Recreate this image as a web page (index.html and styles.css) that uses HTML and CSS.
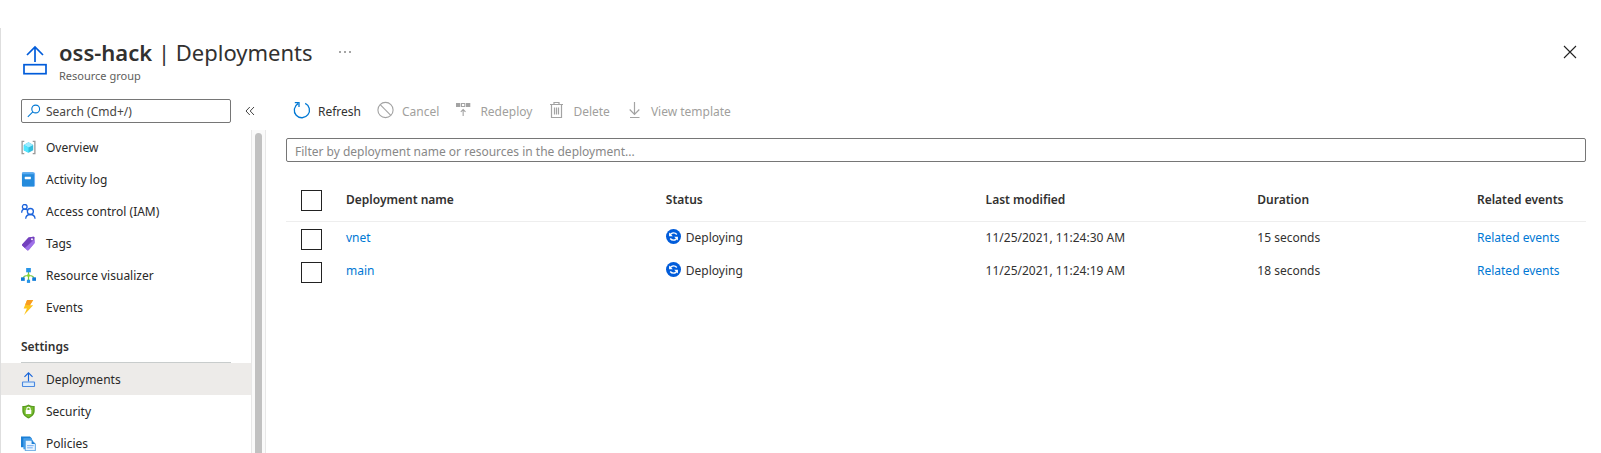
FILE: index.html
```html
<!DOCTYPE html>
<html lang="en">
<head>
<meta charset="utf-8">
<title>oss-hack | Deployments</title>
<link rel="stylesheet" href="styles.css">
</head>
<body>
<div class="blade">
  <header class="blade-header">
    <svg class="blade-icon" viewBox="0 0 24 30" fill="none" stroke="#015cda" stroke-width="1.700"><path d="M12 17V2M4 10l8-8 8 8"/><rect x="1" y="19.700" width="22" height="9"/></svg>
    <div class="blade-titles">
      <h1 class="title"><strong>oss-hack</strong> | Deployments</h1>
      <p class="subtitle">Resource group</p>
    </div>
    <button class="icon-button more" type="button" aria-label="More"><svg width="12" height="4" viewBox="0 0 12 4" fill="#333"><circle cx="1" cy="2" r=".8"/><circle cx="6" cy="2" r=".8"/><circle cx="11" cy="2" r=".8"/></svg></button>
    <button class="icon-button close" type="button" aria-label="Close"><svg width="14" height="14" viewBox="0 0 14 14" stroke="#222" stroke-width="1.1"><path d="M1 1l12 12M13 1L1 13"/></svg></button>
  </header>

  <div class="blade-body">
    <aside class="sidebar">
      <div class="search-row">
        <div class="search-box">
          <svg width="14" height="14" viewBox="0 0 14 14" fill="none" stroke="#0078d4" stroke-width="1.1"><circle cx="8.700" cy="5" r="3.900"/><path d="M5.800 7.800L.8 12.800"/></svg>
          <input class="search-input" type="text" placeholder="Search (Cmd+/)" aria-label="Search">
        </div>
        <button class="icon-button collapse" type="button" aria-label="Collapse menu"><svg width="10" height="10" viewBox="0 0 10 10" fill="none" stroke="#444"><path d="M4.800 1L1 5l3.800 4M9 1L5.200 5 9 9"/></svg></button>
      </div>
      <div class="menu-area">
        <nav class="menu">
          <a class="menu-item" href="#"><svg class="menu-icon" viewBox="0 0 16 16"><path d="M3.500 1.500H1.200v13h2.300M12.500 1.500h2.300v13h-2.300" fill="none" stroke="#999" stroke-width="1.400"/><path d="M8 2.500l5 2.700v5.600L8 13.500l-5-2.700V5.200z" fill="#32bedd"/><path d="M8 2.500l5 2.700L8 8 3 5.200z" fill="#9cebff"/><path d="M3 5.200L8 8v5.500l-5-2.700z" fill="#50e6ff"/></svg>Overview</a>
          <a class="menu-item" href="#"><svg class="menu-icon" viewBox="0 0 16 16"><rect x="1.500" y=".500" width="13.500" height="15" rx="1" fill="#83b9f9"/><path d="M1 1.500a1 1 0 011-1h10.500A1.500 1.500 0 0114 2v13.500H2a1 1 0 01-1-1z" fill="#258bdc"/><path d="M1 1.500a1 1 0 011-1h10.500A1.500 1.500 0 0114 2v.5H1z" fill="#58aaf0"/><rect x="4" y="5" width="6.500" height="2.700" rx=".4" fill="#fff"/></svg>Activity log</a>
          <a class="menu-item" href="#"><svg class="menu-icon" viewBox="0 0 16 16" fill="none" stroke="#1b63dc" stroke-width="1.400"><circle cx="4" cy="3" r="2.500"/><path d="M.7 9.300C.8 7 2.200 5.500 4 5.500c1 0 1.700.3 2.300.9"/><circle cx="10" cy="8" r="3.200"/><path d="M5 15.700c.2-2.700 2.300-4.500 5-4.500s4.800 1.800 5 4.500"/></svg>Access control (IAM)</a>
          <a class="menu-item" href="#"><svg class="menu-icon" viewBox="0 0 16 16"><path d="M8 1.500L13 .800a1.200 1.200 0 011.400 1.200l.2 5.500-6.300 7.500a1.200 1.200 0 01-1.700.1L1.500 10.500a1.200 1.200 0 01-.1-1.700z" fill="#8a58cf"/><path d="M8 1.500L13 .800a1.200 1.200 0 011.400 1.200L4.500 13 1.500 10.500a1.200 1.200 0 01-.1-1.700z" fill="#7340bd"/><path d="M14.400 4l.2 3.500-6.300 7.500a1.200 1.200 0 01-1.700.1L4 12.800z" fill="#a67af4" opacity=".7"/><circle cx="11.700" cy="3.400" r="1" fill="#fff"/></svg>Tags</a>
          <a class="menu-item" href="#"><svg class="menu-icon" viewBox="0 0 16 16"><path d="M8 4v9M2 12c0-3 2.500-4 6-4s6 1 6 4" fill="none" stroke="#77c43a" stroke-width="1.300"/><circle cx="8" cy="8" r="1.500" fill="#86d633"/><rect x="5.500" y="0" width="5" height="4.600" fill="#2795e8"/><rect x="0" y="10" width="4" height="3.700" fill="#0f7bd8"/><rect x="12" y="10" width="4" height="3.700" fill="#0f7bd8"/><rect x="6.300" y="12.500" width="3.400" height="3.400" fill="#2795e8"/></svg>Resource visualizer</a>
          <a class="menu-item" href="#"><svg class="menu-icon" viewBox="0 0 16 16"><path d="M6.500 0H13L9.500 5.500H13L3.300 16l3-7H2.800z" fill="#fcc41c"/><path d="M6.500 0H13L9.500 5.500 4.500 5z" fill="#f99b22"/></svg>Events</a>
          <h2 class="menu-heading">Settings</h2>
          <a class="menu-item selected" href="#" aria-current="page"><svg class="menu-icon" viewBox="0 0 16 16" fill="none" stroke="#1664d9" stroke-width="1.200"><path d="M8 10V1M3.700 5.200L8 .900l4.300 4.300"/><rect x="1.600" y="10.600" width="12.800" height="4.800" rx=".5" fill="#dcecfb" stroke="#4a88e0"/></svg>Deployments</a>
          <a class="menu-item" href="#"><svg class="menu-icon" viewBox="0 0 16 16"><path d="M8 .500c2 1.400 4 1.600 6.600 1.600v5.300c0 4-3.600 6.600-6.600 8.100-3-1.500-6.600-4.100-6.600-8.100V2.100C4 2.100 6 1.900 8 .500z" fill="#5a9c21"/><path d="M8 2c1.600 1 3.300 1.300 5.100 1.300v4.200c0 3.200-2.600 5.300-5.100 6.600-2.500-1.300-5.100-3.400-5.100-6.600V3.300C4.700 3.300 6.400 3 8 2z" fill="#76bc2d"/><rect x="5" y="6.300" width="6" height="4.400" rx=".5" fill="#fff"/><path d="M6.200 6.600V5.300a1.800 1.800 0 013.600 0v1.300" fill="none" stroke="#fff" stroke-width="1.200"/></svg>Security</a>
          <a class="menu-item" href="#"><svg class="menu-icon" viewBox="0 0 16 16"><path d="M0 .500h9.500l2 2V12H0z" fill="#1b7fd6"/><path d="M2.500 2.500h8l2 2V14h-10z" fill="#4ca3ec"/><path d="M4.500 4.500h6.800l4 4v7.200H4.500z" fill="#e8f4ff" stroke="#2b88d8" stroke-width=".8"/><path d="M11.300 4.500v4h4z" fill="#1b7fd6"/><path d="M6.500 10.300h7M6.500 12.600h6" stroke="#5ea0ef" stroke-width=".9"/></svg>Policies</a>
        </nav>
        <div class="scroll-track"><div class="scroll-thumb"></div></div>
      </div>
    </aside>

    <main class="content">
      <div class="toolbar">
        <button class="command" type="button"><svg class="command-icon" viewBox="0 0 18 18" fill="none" stroke="#0078d4" stroke-width="1.300"><path d="M12.200 2.300A7.600 7.600 0 1 1 5 2.600M1.800 1.700H6v4.400"/></svg>Refresh</button>
        <button class="command" type="button" disabled><svg class="command-icon" viewBox="0 0 18 18" fill="none" stroke="#a3a3a3" stroke-width="1.100"><circle cx="8.500" cy="9" r="7.600"/><path d="M3.200 3.700l10.600 10.600"/></svg>Cancel</button>
        <button class="command" type="button" disabled><svg class="command-icon" viewBox="0 0 18 18" fill="#a3a3a3"><path d="M1 2h4.300v4H1zM11 2h4.300v4H11z"/><path d="M6.500 2.500h3.300v3H6.500zM8.150 15V9M5.800 10.800l2.350-2.300 2.350 2.300" fill="none" stroke="#a3a3a3" stroke-width="1.100"/></svg>Redeploy</button>
        <button class="command" type="button" disabled><svg class="command-icon" viewBox="0 0 18 18" fill="none" stroke="#a3a3a3" stroke-width="1.200"><path d="M2 3.500h13M6 3.500v-2h5v2M3.500 3.500v13h10v-13M6.500 6.500v7M8.500 6.500v7M10.500 6.500v7"/></svg>Delete</button>
        <button class="command" type="button" disabled><svg class="command-icon" viewBox="0 0 18 18" fill="none" stroke="#a3a3a3" stroke-width="1.200"><path d="M8.500 1v12M3.700 8.500l4.800 4.800 4.800-4.800M4 16.500h9.500"/></svg>View template</button>
      </div>
      <input class="filter-input" type="text" placeholder="Filter by deployment name or resources in the deployment..." aria-label="Filter deployments">
      <table class="deployments">
        <colgroup><col class="col-check"><col class="col-name"><col class="col-status"><col class="col-modified"><col class="col-duration"><col></colgroup>
        <thead>
          <tr><th class="check-cell"><input class="check" type="checkbox" aria-label="Select all"></th><th>Deployment name</th><th>Status</th><th>Last modified</th><th>Duration</th><th>Related events</th></tr>
        </thead>
        <tbody>
          <tr><td class="check-cell"><input class="check" type="checkbox" aria-label="Select vnet"></td><td><a class="link" href="#">vnet</a></td><td><span class="status"><svg class="status-icon" viewBox="0 0 16 16"><circle cx="8" cy="8" r="8" fill="#015cda"/><path d="M4.300 6.700C5 5 6.300 4.100 8 4.100c1.500 0 2.600.6 3.500 1.800M11.700 9.300C11 11 9.700 11.900 8 11.900c-1.500 0-2.600-.6-3.500-1.800" fill="none" stroke="#fff" stroke-width="1.500"/><path d="M3.300 3.800v4h4zM12.700 12.200v-4h-4z" fill="#fff"/></svg>Deploying</span></td><td>11/25/2021, 11:24:30 AM</td><td>15 seconds</td><td><a class="link" href="#">Related events</a></td></tr>
          <tr><td class="check-cell"><input class="check" type="checkbox" aria-label="Select main"></td><td><a class="link" href="#">main</a></td><td><span class="status"><svg class="status-icon" viewBox="0 0 16 16"><circle cx="8" cy="8" r="8" fill="#015cda"/><path d="M4.300 6.700C5 5 6.300 4.100 8 4.100c1.500 0 2.600.6 3.500 1.800M11.700 9.300C11 11 9.700 11.900 8 11.900c-1.500 0-2.600-.6-3.500-1.800" fill="none" stroke="#fff" stroke-width="1.500"/><path d="M3.300 3.800v4h4zM12.700 12.200v-4h-4z" fill="#fff"/></svg>Deploying</span></td><td>11/25/2021, 11:24:19 AM</td><td>18 seconds</td><td><a class="link" href="#">Related events</a></td></tr>
        </tbody>
      </table>
    </main>
  </div>
</div>
</body>
</html>
```
FILE: styles.css
```css
* { box-sizing: border-box; }

body {
  margin: 0;
  height: 100vh;
  overflow: hidden;
  padding-top: 28px;
  background: #fff;
  color: #323130;
  font: 12px/16px "Noto Sans", "Open Sans", sans-serif;
}

button, input { font: inherit; color: inherit; }

.blade {
  height: 100%;
  display: flex;
  flex-direction: column;
  border-left: 1px solid #dedede;
}

.blade-header {
  display: flex;
  align-items: flex-start;
  padding: 8px 24px 0 22px;
}

.blade-icon { width: 24px; height: 30px; margin-top: 9px; }
.blade-titles { margin-left: 12px; }
.title { margin: 0; font-size: 22px; line-height: 32px; font-weight: 400; }
.title strong { font-weight: 600; }
.subtitle { margin: 0; font-size: 11px; line-height: 16px; color: #605e5c; }

.icon-button {
  display: flex;
  align-items: center;
  justify-content: center;
  padding: 0;
  border: 0;
  background: none;
}

.more { width: 24px; height: 32px; margin-left: 20px; }
.close { width: 14px; height: 32px; margin-left: auto; }

.blade-body { flex: 1; min-height: 0; display: flex; padding-top: 15px; }

.sidebar { width: 265px; flex: none; display: flex; flex-direction: column; }
.search-row { display: flex; align-items: center; gap: 14px; padding: 0 0 7px 20px; }

.search-box {
  width: 210px;
  height: 24px;
  display: flex;
  align-items: center;
  gap: 5px;
  padding: 0 5px;
  border: 1px solid #767676;
  border-radius: 2px;
}

.search-input { flex: 1; min-width: 0; padding: 2px 0 0; border: 0; outline: 0; background: none; }
.search-input::placeholder { color: #484644; opacity: 1; }

.menu-area { flex: 1; min-height: 0; display: flex; }
.menu { flex: 1; overflow: hidden; padding-top: 1px; }

.menu-item {
  height: 32px;
  display: flex;
  align-items: center;
  gap: 10px;
  padding: 2px 0 0 20px;
  color: #292827;
  text-decoration: none;
}

.menu-icon { width: 15px; height: 15px; margin-bottom: 2px; }
.selected { background: #edebe9; }

.menu-heading {
  margin: 8px 20px 0;
  padding: 8px 0 7px;
  border-bottom: 1px solid #c8cccc;
  font-size: 12px;
  line-height: 16px;
  font-weight: 600;
}

.scroll-track {
  width: 15px;
  padding: 3px 3px 0;
  border: solid #e8e8e8;
  border-width: 0 1px;
  background: #fafafa;
}

.scroll-thumb { height: 100%; border-radius: 4px 4px 0 0; background: #c1c1c1; }

.content { flex: 1; min-width: 0; padding: 0 15px 0 20px; }
.toolbar { display: flex; gap: 16px; padding-left: 7px; height: 24px; }

.command {
  display: flex;
  align-items: center;
  gap: 7px;
  padding: 2px 0 0;
  border: 0;
  background: none;
}

.command:disabled { color: #a19f9d; }
.command-icon { width: 18px; height: 18px; margin-bottom: 4px; }

.filter-input {
  display: block;
  width: 100%;
  height: 24px;
  margin: 15px 0 17px;
  padding: 2px 8px 0;
  border: 1px solid #767676;
  border-radius: 2px;
}

.filter-input::placeholder { color: #888; opacity: 1; }

.deployments { width: 100%; table-layout: fixed; border-collapse: collapse; }
.col-check { width: 60px; }
.col-name, .col-status { width: 24.600%; }
.col-modified { width: 20.900%; }
.col-duration { width: 16.900%; }

.deployments th { height: 42px; padding: 0; text-align: left; font-weight: 600; border-bottom: 1px solid #eee; }
.deployments td { height: 33px; padding: 0; }

.check {
  display: block;
  appearance: none;
  width: 21px;
  height: 21px;
  margin: 0 0 0 15px;
  border: 1px solid #222;
  background: #fff;
}

.deployments th.check-cell { padding-top: 2px; }
.deployments td.check-cell { padding-top: 4px; }
.status { display: flex; align-items: center; gap: 5px; }
.status-icon { width: 15px; height: 15px; margin-bottom: 2px; }
.link { color: #0078d4; text-decoration: none; }
```
